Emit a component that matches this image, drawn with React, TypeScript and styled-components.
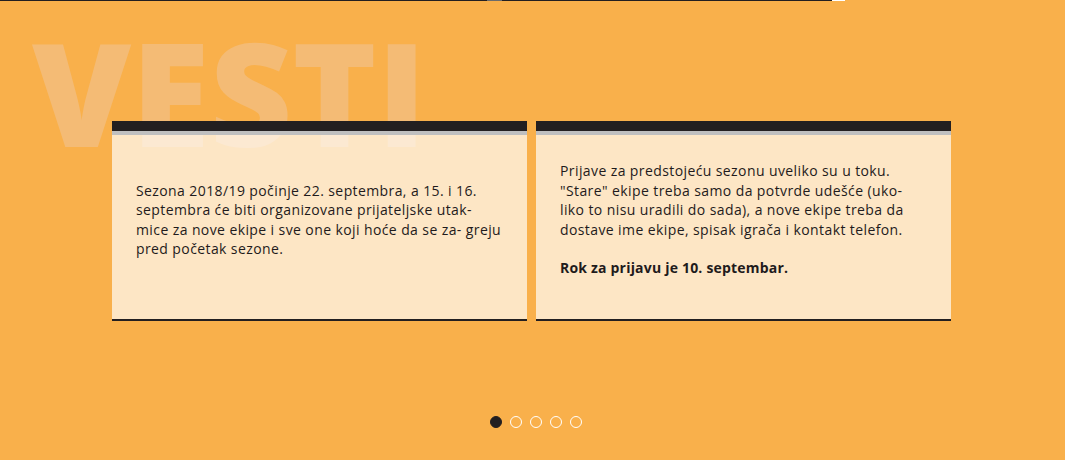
import React from "react";
import styled, { createGlobalStyle } from "styled-components";

const GlobalStyle = createGlobalStyle`
  html, body {
    margin: 0;
    padding: 0;
    background: #f9b04b;
  }
  body {
    font-family: "Open Sans", "Noto Sans", sans-serif;
  }
`;

const Page = styled.section`
  width: 1065px;
  height: 460px;
  background: #f9b04b;
  overflow: hidden;
  display: flex;
  flex-direction: column;
`;

const TopBar = styled.div`
  display: flex;
  height: 1px;
`;

const BarSegment = styled.div<{ $w: number; $c: string }>`
  width: ${(p) => p.$w}px;
  background: ${(p) => p.$c};
  flex: none;
`;

const Heading = styled.h2`
  margin: 19px 0 0 32px;
  font-family: "Open Sans", sans-serif;
  font-weight: 800;
  font-size: 143px;
  line-height: 1;
  height: 143px;
  color: #f4bb75;
  letter-spacing: 0;
`;

const CardRow = styled.div`
  position: relative;
  display: flex;
  gap: 9px;
  margin: -42px 0 0 112px;
`;

const Card = styled.article`
  width: 415px;
  height: 200px;
  box-sizing: border-box;
  border-top: 10px solid #231f20;
  border-bottom: 2px solid #231f20;
  box-shadow: inset 0 4px 0 #bfbfbf;
  background: rgba(255, 255, 255, 0.68);
  display: flex;
  align-items: center;
  padding: 4px 24px 15px;
`;

const Text = styled.div`
  font-family: "Open Sans", sans-serif;
  font-size: 14px;
  line-height: 19.4px;
  color: #1f1b1c;
  white-space: nowrap;
`;

const Para = styled.p<{ $bold?: boolean }>`
  margin: 0;
  font-weight: ${(p) => (p.$bold ? 700 : 500)};
  letter-spacing: ${(p) => (p.$bold ? "0.2px" : "0.4px")};
  & + & {
    margin-top: 19.4px;
  }
`;

const Dots = styled.div`
  display: flex;
  justify-content: center;
  gap: 8px;
  margin-top: 95px;
  padding-left: 7px;
`;

const Dot = styled.span<{ $active?: boolean }>`
  width: 12px;
  height: 12px;
  box-sizing: border-box;
  border-radius: 50%;
  background: ${(p) => (p.$active ? "#231f20" : "transparent")};
  border: 1.5px solid ${(p) => (p.$active ? "#231f20" : "#ffffff")};
`;

export default function App() {
  return (
    <>
      <GlobalStyle />
      <Page>
        <TopBar>
          <BarSegment $w={487} $c="#231f20" />
          <BarSegment $w={15} $c="#6b6b6b" />
          <BarSegment $w={330} $c="#231f20" />
          <BarSegment $w={13} $c="#ffffff" />
        </TopBar>
        <Heading>VESTI</Heading>
        <CardRow>
          <Card>
            <Text>
              <Para>
                Sezona 2018/19 počinje 22. septembra, a 15. i 16.
                <br />
                septembra će biti organizovane prijateljske utak-
                <br />
                mice za nove ekipe i sve one koji hoće da se za- greju
                <br />
                pred početak sezone.
              </Para>
            </Text>
          </Card>
          <Card>
            <Text>
              <Para>
                Prijave za predstojeću sezonu uveliko su u toku.
                <br />
                "Stare" ekipe treba samo da potvrde udešće (uko-
                <br />
                liko to nisu uradili do sada), a nove ekipe treba da
                <br />
                dostave ime ekipe, spisak igrača i kontakt telefon.
              </Para>
              <Para $bold>Rok za prijavu je 10. septembar.</Para>
            </Text>
          </Card>
        </CardRow>
        <Dots>
          <Dot $active />
          <Dot />
          <Dot />
          <Dot />
          <Dot />
        </Dots>
      </Page>
    </>
  );
}
